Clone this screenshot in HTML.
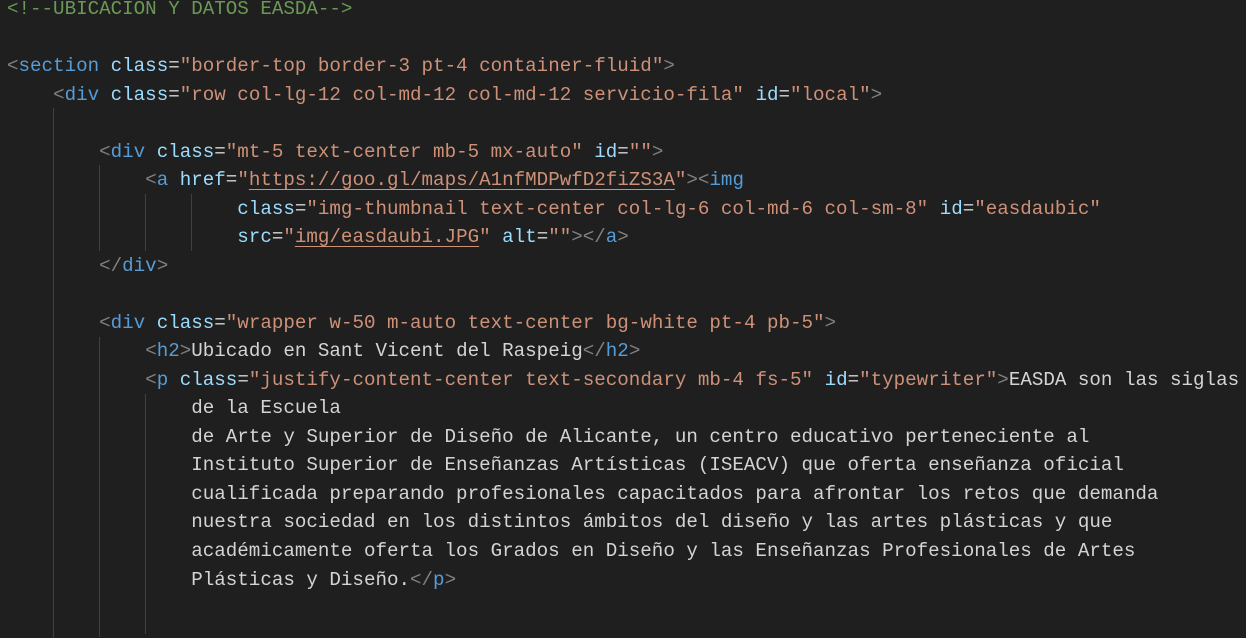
<!DOCTYPE html>
<html><head><meta charset="utf-8"><style>
html,body{margin:0;padding:0;background:#1f1f1f;width:1246px;height:626px;overflow:hidden}
pre{position:absolute;left:7px;top:-4.8px;margin:0;font-family:"Liberation Mono",monospace;font-size:19.2px;line-height:28.52px;color:#d4d4d4;white-space:pre}
.c{color:#6a9955}.p{color:#808080}.t{color:#569cd6}.a{color:#9cdcfe}.s{color:#ce9178}
.u{text-decoration:underline;text-underline-offset:4px}
.g{position:absolute;width:1px;background:#404040}
</style></head><body>
<div class="g" style="left:53px;top:108px;height:530px"></div>
<div class="g" style="left:99px;top:165px;height:86px"></div>
<div class="g" style="left:99px;top:337px;height:300px"></div>
<div class="g" style="left:145px;top:194px;height:57px"></div>
<div class="g" style="left:145px;top:394px;height:240px"></div>
<div class="g" style="left:191px;top:194px;height:57px"></div>
<pre><span class="c">&lt;!--UBICACION Y DATOS EASDA--&gt;</span>

<span class="p">&lt;</span><span class="t">section</span> <span class="a">class</span>=<span class="s">"border-top border-3 pt-4 container-fluid"</span><span class="p">&gt;</span>
    <span class="p">&lt;</span><span class="t">div</span> <span class="a">class</span>=<span class="s">"row col-lg-12 col-md-12 col-md-12 servicio-fila"</span> <span class="a">id</span>=<span class="s">"local"</span><span class="p">&gt;</span>

        <span class="p">&lt;</span><span class="t">div</span> <span class="a">class</span>=<span class="s">"mt-5 text-center mb-5 mx-auto"</span> <span class="a">id</span>=<span class="s">""</span><span class="p">&gt;</span>
            <span class="p">&lt;</span><span class="t">a</span> <span class="a">href</span>=<span class="s">"<span class="u">https://goo.gl/maps/A1nfMDPwfD2fiZS3A</span>"</span><span class="p">&gt;&lt;</span><span class="t">img</span>
                    <span class="a">class</span>=<span class="s">"img-thumbnail text-center col-lg-6 col-md-6 col-sm-8"</span> <span class="a">id</span>=<span class="s">"easdaubic"</span>
                    <span class="a">src</span>=<span class="s">"<span class="u">img/easdaubi.JPG</span>"</span> <span class="a">alt</span>=<span class="s">""</span><span class="p">&gt;&lt;/</span><span class="t">a</span><span class="p">&gt;</span>
        <span class="p">&lt;/</span><span class="t">div</span><span class="p">&gt;</span>

        <span class="p">&lt;</span><span class="t">div</span> <span class="a">class</span>=<span class="s">"wrapper w-50 m-auto text-center bg-white pt-4 pb-5"</span><span class="p">&gt;</span>
            <span class="p">&lt;</span><span class="t">h2</span><span class="p">&gt;</span>Ubicado en Sant Vicent del Raspeig<span class="p">&lt;/</span><span class="t">h2</span><span class="p">&gt;</span>
            <span class="p">&lt;</span><span class="t">p</span> <span class="a">class</span>=<span class="s">"justify-content-center text-secondary mb-4 fs-5"</span> <span class="a">id</span>=<span class="s">"typewriter"</span><span class="p">&gt;</span>EASDA son las siglas
                de la Escuela
                de Arte y Superior de Diseño de Alicante, un centro educativo perteneciente al
                Instituto Superior de Enseñanzas Artísticas (ISEACV) que oferta enseñanza oficial
                cualificada preparando profesionales capacitados para afrontar los retos que demanda
                nuestra sociedad en los distintos ámbitos del diseño y las artes plásticas y que
                académicamente oferta los Grados en Diseño y las Enseñanzas Profesionales de Artes
                Plásticas y Diseño.<span class="p">&lt;/</span><span class="t">p</span><span class="p">&gt;</span>

</pre>
</body></html>
